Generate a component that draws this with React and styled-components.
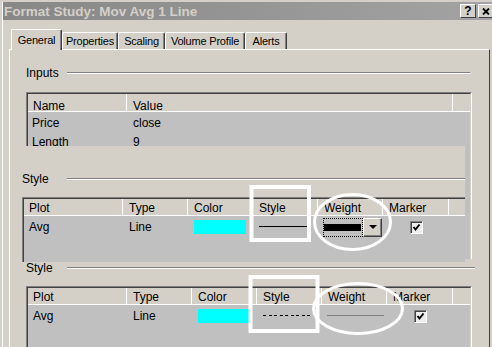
import React from "react";
import styled, { createGlobalStyle } from "styled-components";

const GlobalStyle = createGlobalStyle`
  html, body {
    margin: 0;
    padding: 0;
    background: #d4d0c8;
  }
  body {
    font-family: "Liberation Sans", Arial, sans-serif;
    font-size: 12px;
    color: #000;
    overflow: hidden;
  }
`;

const Window = styled.div`
  position: relative;
  width: 492px;
  height: 347px;
  box-sizing: border-box;
  padding: 2px 0 0 2px;
  overflow: hidden;
  background: #d4d0c8;
`;

const Frame = styled.div`
  display: flex;
  flex-direction: column;
  height: 100%;
  border-left: 1px solid #fff;
`;

const TitleBar = styled.div`
  display: flex;
  align-items: center;
  height: 18px;
  padding-left: 1px;
  background: linear-gradient(90deg, #878787, #a3a3a3);
`;

const Title = styled.div`
  flex: 1;
  font-size: 13.5px;
  font-weight: bold;
  color: #d4d0c8;
  white-space: nowrap;
`;

const TitleButton = styled.div`
  box-sizing: border-box;
  width: 16px;
  height: 14px;
  margin-left: 2px;
  margin-right: ${(p) => (p.$last ? -2 : 0)}px;
  display: flex;
  align-items: center;
  justify-content: center;
  background: #d4d0c8;
  border: 1px solid;
  border-color: #fff #404040 #404040 #fff;
  font-size: 12px;
  font-weight: bold;
  line-height: 1;
`;

const TabStrip = styled.div`
  display: flex;
  align-items: flex-end;
  height: 20px;
  margin: 9px 0 0 8px;
`;

const Tab = styled.div`
  box-sizing: border-box;
  width: ${(p) => p.$w}px;
  height: ${(p) => (p.$active ? 21 : 17)}px;
  margin-bottom: ${(p) => (p.$active ? -1 : 0)}px;
  z-index: ${(p) => (p.$active ? 2 : 0)};
  display: flex;
  align-items: center;
  justify-content: center;
  background: #d4d0c8;
  border-top: 1px solid #fff;
  border-left: 1px solid #fff;
  border-right: 1px solid #404040;
  box-shadow: inset -1px 0 #808080;
  border-radius: 2px 2px 0 0;
  font-size: 11px;
  letter-spacing: -0.2px;
  white-space: nowrap;
`;

const Panel = styled.div`
  flex: 1;
  width: 481px;
  margin-left: 6px;
  box-sizing: border-box;
  display: flex;
  flex-direction: column;
  padding-left: 16px;
  border-top: 1px solid #fff;
  border-left: 1px solid #fff;
  border-right: 1px solid #404040;
  min-height: 0;
`;

const GroupHead = styled.div`
  display: flex;
  align-items: center;
  height: 14px;
  margin-top: ${(p) => p.$top}px;
  margin-right: ${(p) => p.$right}px;
  flex-shrink: 0;
`;

const GroupLabel = styled.div`
  width: ${(p) => p.$w}px;
  flex-shrink: 0;
  line-height: 14px;
`;

const GroupLine = styled.div`
  flex: 1;
  border-top: 1px solid #808080;
  border-bottom: 1px solid #fff;
`;

const Table = styled.div`
  width: 446px;
  flex-shrink: 0;
  box-sizing: border-box;
  margin-top: ${(p) => p.$top}px;
  height: ${(p) => (p.$h ? `${p.$h}px` : "auto")};
  flex-grow: ${(p) => (p.$grow ? 1 : 0)};
  display: flex;
  flex-direction: column;
  overflow: hidden;
  border-top: 1px solid #808080;
  border-left: 1px solid #808080;
  border-right: 1px solid #fff;
`;

const TableInner = styled.div`
  flex: 1;
  display: flex;
  flex-direction: column;
  border-top: 1px solid #404040;
  border-left: 1px solid #404040;
  border-right: 1px solid #d4d0c8;
`;

const HeadRow = styled.div`
  display: flex;
  flex-shrink: 0;
  box-sizing: border-box;
  height: ${(p) => p.$h}px;
  background: #d4d0c8;
  border-bottom: 1px solid #fff;
`;

const HeadCell = styled.div`
  box-sizing: border-box;
  width: ${(p) => (p.$w ? `${p.$w}px` : "auto")};
  flex: ${(p) => (p.$w ? "none" : 1)};
  padding: ${(p) => p.$pt}px 0 0 ${(p) => (p.$first ? 5 : 6)}px;
  border-left: ${(p) => (p.$first ? "none" : "1px solid #fff")};
  line-height: 16px;
  white-space: nowrap;
`;

const DataArea = styled.div`
  flex: 1;
  background: #c0c0c0;
`;

const DataRow = styled.div`
  display: flex;
  box-sizing: border-box;
  height: ${(p) => p.$h}px;
`;

const DataCell = styled.div`
  box-sizing: border-box;
  width: ${(p) => p.$w}px;
  flex-shrink: 0;
  display: flex;
  align-items: ${(p) => (p.$top ? "flex-start" : "center")};
  padding-left: ${(p) => p.$pl}px;
  padding-top: ${(p) => (p.$top ? 2 : 0)}px;
  line-height: ${(p) => (p.$top ? 19 : 14)}px;
  white-space: nowrap;
`;

const Swatch = styled.div`
  width: 52px;
  height: 14px;
  background: #00ffff;
`;

const LineSample = styled.div`
  width: 49px;
  height: 1px;
  margin-top: -1px;
  background: ${(p) =>
    p.$dashed
      ? "repeating-linear-gradient(90deg, #000 0 3px, transparent 3px 5.5px)"
      : "#000"};
`;

const Combo = styled.div`
  display: flex;
  height: 19px;
`;

const ComboField = styled.div`
  box-sizing: border-box;
  width: 40px;
  height: 19px;
  border: 1px dotted #000;
  display: flex;
  align-items: center;
  justify-content: flex-start;
`;

const WeightBar = styled.div`
  width: 37px;
  height: 7px;
  background: #000;
`;

const DropButton = styled.div`
  box-sizing: border-box;
  width: 19px;
  height: 19px;
  display: flex;
  align-items: center;
  justify-content: center;
  background: #d4d0c8;
  border: 1px solid;
  border-color: #fff #404040 #404040 #fff;
  box-shadow: inset -1px -1px #808080;
`;

const Arrow = styled.div`
  width: 0;
  height: 0;
  border-left: 4px solid transparent;
  border-right: 4px solid transparent;
  border-top: 4px solid #000;
`;

const ThinLine = styled.div`
  width: 57px;
  height: 1px;
  margin-top: -2px;
  background: #808080;
`;

const CheckBox = styled.div`
  box-sizing: border-box;
  width: 13px;
  height: 13px;
  background: #ededed;
  border: 1px solid;
  border-color: #808080 #fff #fff #808080;
  box-shadow: inset 1px 1px #404040;
  display: flex;
  align-items: center;
  justify-content: center;
`;

const Overlay = styled.div`
  position: absolute;
  top: 146px;
  left: 10px;
  width: 455px;
  height: 116px;
  box-sizing: border-box;
  padding-left: 12px;
  background: #d4d0c8;
  overflow: hidden;
  display: flex;
  flex-direction: column;
  z-index: 3;
`;

const Marks = styled.svg`
  position: absolute;
  top: 0;
  left: 0;
  z-index: 5;
  pointer-events: none;
`;

const styleCols = [
  { key: "plot", label: "Plot", w: 98 },
  { key: "type", label: "Type", w: 65 },
  { key: "color", label: "Color", w: 65 },
  { key: "style", label: "Style", w: 65 },
  { key: "weight", label: "Weight", w: 65 },
  { key: "marker", label: "Marker", w: 66 },
];

const Check = () => (
  <svg width="9" height="9" viewBox="0 0 9 9">
    <polyline points="1.5,4 3.5,6.5 7.5,1.5" fill="none" stroke="#000" strokeWidth="2" />
  </svg>
);

const CloseGlyph = () => (
  <svg width="8" height="7" viewBox="0 0 8 7">
    <path d="M1 0.5 L7 6.5 M7 0.5 L1 6.5" stroke="#000" strokeWidth="1.8" />
  </svg>
);

const StyleTable = ({ top, thin }) => (
  <Table $top={top} $grow>
    <TableInner>
      <HeadRow $h={17}>
        {styleCols.map((c, i) => (
          <HeadCell key={c.key} $w={c.w} $first={i === 0} $pt={1}>
            {c.label}
          </HeadCell>
        ))}
        <HeadCell $pt={1} />
      </HeadRow>
      <DataArea>
        <DataRow $h={22}>
          <DataCell $w={98} $pl={5}>Avg</DataCell>
          <DataCell $w={65} $pl={7}>Line</DataCell>
          <DataCell $w={65} $pl={7}>
            <Swatch />
          </DataCell>
          <DataCell $w={65} $pl={7}>
            <LineSample $dashed={thin} />
          </DataCell>
          <DataCell $w={65} $pl={6}>
            {thin ? (
              <ThinLine />
            ) : (
              <Combo>
                <ComboField>
                  <WeightBar />
                </ComboField>
                <DropButton>
                  <Arrow />
                </DropButton>
              </Combo>
            )}
          </DataCell>
          <DataCell $w={66} $pl={28}>
            <CheckBox>
              <Check />
            </CheckBox>
          </DataCell>
        </DataRow>
      </DataArea>
    </TableInner>
  </Table>
);

const tabs = [
  { label: "General", w: 51, active: true },
  { label: "Properties", w: 56 },
  { label: "Scaling", w: 47 },
  { label: "Volume Profile", w: 80 },
  { label: "Alerts", w: 42 },
];

const inputs = [
  ["Price", "close"],
  ["Length", "9"],
];

export default function App() {
  return (
    <>
      <GlobalStyle />
      <Window>
        <Frame>
          <TitleBar>
            <Title>Format Study: Mov Avg 1 Line</Title>
            <TitleButton>?</TitleButton>
            <TitleButton $last>
              <CloseGlyph />
            </TitleButton>
          </TitleBar>

          <TabStrip>
            {tabs.map((t) => (
              <Tab key={t.label} $w={t.w} $active={t.active}>
                {t.label}
              </Tab>
            ))}
          </TabStrip>

          <Panel>
            <GroupHead $top={16} $right={19}>
              <GroupLabel $w={41}>Inputs</GroupLabel>
              <GroupLine />
            </GroupHead>
            <Table $top={12} $h={167}>
              <TableInner>
                <HeadRow $h={18}>
                  <HeadCell $w={98} $first $pt={4}>Name</HeadCell>
                  <HeadCell $w={326} $pt={4}>Value</HeadCell>
                  <HeadCell $pt={4} />
                </HeadRow>
                <DataArea>
                  {inputs.map(([name, value]) => (
                    <DataRow key={name} $h={19}>
                      <DataCell $w={98} $pl={4} $top>{name}</DataCell>
                      <DataCell $w={326} $pl={7} $top>{value}</DataCell>
                    </DataRow>
                  ))}
                </DataArea>
              </TableInner>
            </Table>

            <GroupHead $top={2} $right={14}>
              <GroupLabel $w={41}>Style</GroupLabel>
              <GroupLine />
            </GroupHead>
            <StyleTable top={11} thin />
          </Panel>
        </Frame>

        <Overlay>
          <GroupHead $top={26} $right={0}>
            <GroupLabel $w={45}>Style</GroupLabel>
            <GroupLine />
          </GroupHead>
          <StyleTable top={11} />
        </Overlay>

        <Marks width="492" height="347" viewBox="0 0 492 347">
          <g fill="none" stroke="#fff">
            <rect x="251.5" y="187" width="57.5" height="53" strokeWidth="4" />
            <ellipse cx="352.5" cy="222" rx="38" ry="27.5" strokeWidth="3" />
            <rect x="250.5" y="277" width="67" height="54" strokeWidth="4" />
            <ellipse cx="358" cy="308.5" rx="44.5" ry="25" strokeWidth="3" />
          </g>
        </Marks>
      </Window>
    </>
  );
}
